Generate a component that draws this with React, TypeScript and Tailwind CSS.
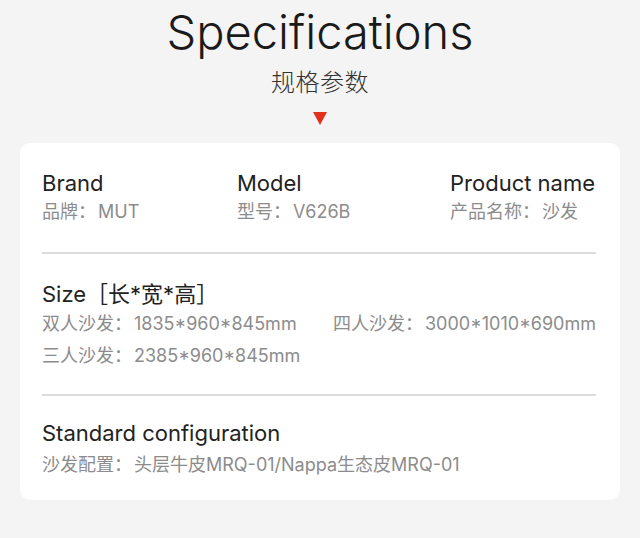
import React from "react";

const sans = { fontFamily: 'Inter, "Noto Sans CJK SC", sans-serif' };

const Value = ({ k, v }: { k: string; v: string }) => (
  <span className="whitespace-nowrap">
    {k}：<span className="ml-[2px]">{v}</span>
  </span>
);

const Field = ({
  label,
  k,
  v,
  gap = "mt-[4px]",
  className = "",
}: {
  label: string;
  k: string;
  v: string;
  gap?: string;
  className?: string;
}) => (
  <div className={className}>
    <div className="text-[22px] leading-[26px] text-[#222]">{label}</div>
    <div className={`${gap} text-[18px] leading-[24px] text-[#8c8c8c]`}>
      <Value k={k} v={v} />
    </div>
  </div>
);

export default function App() {
  return (
    <div className="w-[640px] h-[538px] bg-[#f4f4f4] flex flex-col items-center" style={sans}>
      <h1 className="mt-[4px] text-[47px] leading-[56px] font-light text-[#1a1a1a]">
        Specifications
      </h1>
      <div className="mt-[6px] text-[24px] leading-[30px] font-light text-[#333] tracking-[0.5px]" style={{ fontFamily: '"Noto Sans CJK SC", sans-serif' }}>
        规格参数
      </div>
      <div className="mt-[16px] w-0 h-0 border-l-[7.5px] border-r-[7.5px] border-t-[13px] border-l-transparent border-r-transparent border-t-[#e1301d]" />

      <div className="mt-[18px] w-[600px] bg-white rounded-[10px] pl-[22px] pr-[24px]">
        <div className="flex pt-[27px] pb-[28px] border-b-2 border-[#dcdcdc]">
          <Field className="w-[195px]" label="Brand" k="品牌" v="MUT" />
          <Field className="w-[213px]" label="Model" k="型号" v="V626B" />
          <Field label="Product name" k="产品名称" v="沙发" />
        </div>

        <div className="pt-[27px] pb-[26px] border-b-2 border-[#dcdcdc]">
          <div className="text-[22px] leading-[26px] text-[#222]">Size［长*宽*高］</div>
          <div className="mt-[5px] flex text-[18px] leading-[24px] text-[#8c8c8c]">
            <div className="w-[291px] shrink-0">
              <Value k="双人沙发" v="1835*960*845mm" />
            </div>
            <Value k="四人沙发" v="3000*1010*690mm" />
          </div>
          <div className="mt-[8px] text-[18px] leading-[24px] text-[#8c8c8c]">
            <Value k="三人沙发" v="2385*960*845mm" />
          </div>
        </div>

        <div className="pt-[24px] pb-[23px]">
          <Field label="Standard configuration" k="沙发配置" v="头层牛皮MRQ-01/Nappa生态皮MRQ-01" gap="mt-[7px]" />
        </div>
      </div>
    </div>
  );
}
